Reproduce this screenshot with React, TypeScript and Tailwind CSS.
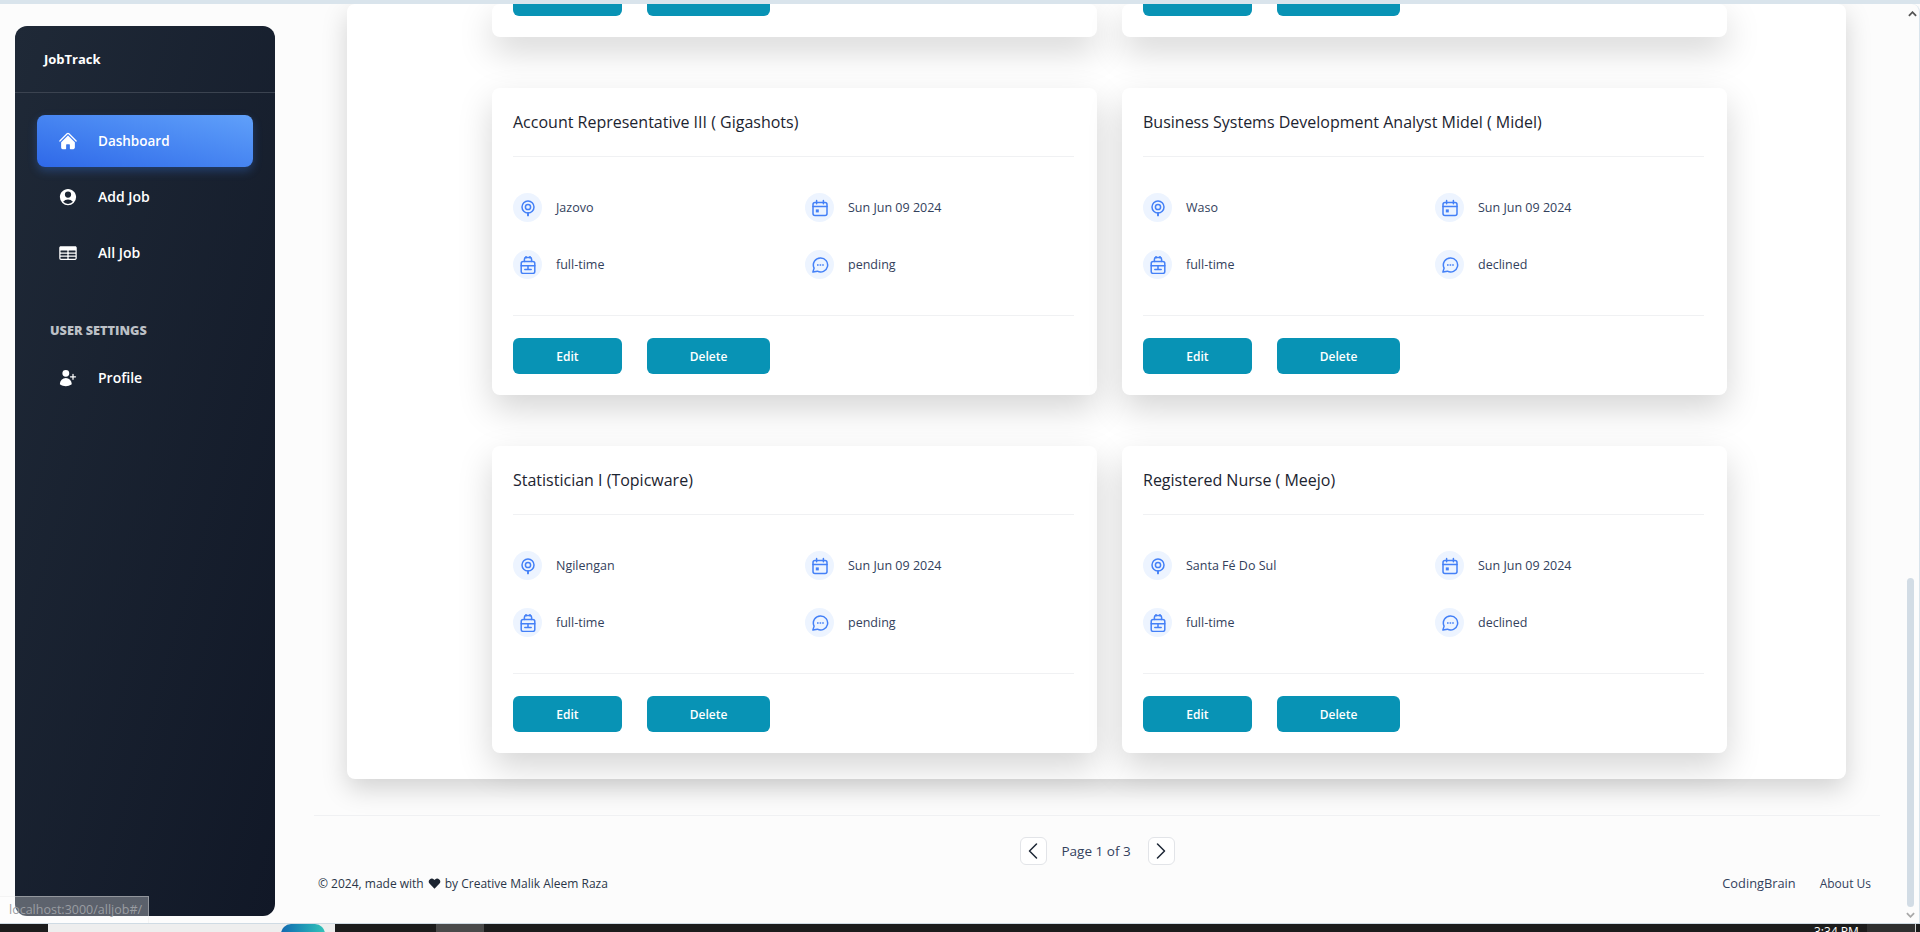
import { HiHome, HiUserCircle, HiTableCells, HiUserPlus } from "react-icons/hi2";
import { ChevronLeft, ChevronRight } from "lucide-react";

const jobs = [
  [
    { title: "Account Representative III ( Gigashots)", place: "Jazovo", date: "Sun Jun 09 2024", type: "full-time", status: "pending" },
    { title: "Business Systems Development Analyst Midel ( Midel)", place: "Waso", date: "Sun Jun 09 2024", type: "full-time", status: "declined" },
  ],
  [
    { title: "Statistician I (Topicware)", place: "Ngilengan", date: "Sun Jun 09 2024", type: "full-time", status: "pending" },
    { title: "Registered Nurse ( Meejo)", place: "Santa Fé Do Sul", date: "Sun Jun 09 2024", type: "full-time", status: "declined" },
  ],
];

const navItems = [
  { label: "Dashboard", icon: HiHome, active: true },
  { label: "Add Job", icon: HiUserCircle },
  { label: "All Job", icon: HiTableCells },
];

function PinIcon() {
  return (
    <svg viewBox="0 0 18 18" className="w-[18px] h-[18px]" fill="none" stroke="currentColor" strokeWidth="1.5">
      <circle cx="9" cy="8" r="6" />
      <circle cx="9" cy="8" r="2.6" />
      <path d="M9 14v2.4" strokeWidth="1.9" strokeLinecap="round" />
    </svg>
  );
}

function CalendarIcon() {
  return (
    <svg viewBox="0 0 18 18" className="w-[18px] h-[18px]" fill="none" stroke="currentColor" strokeWidth="1.5">
      <rect x="2" y="3.4" width="14" height="13.2" rx="2" />
      <path d="M2 7.6h14M5.6 1.4v3.4M12.4 1.4v3.4" strokeLinecap="round" />
      <rect x="4.8" y="10.4" width="3" height="3" fill="currentColor" stroke="none" />
    </svg>
  );
}

function BagIcon() {
  return (
    <svg viewBox="0 0 18 18" className="w-[18px] h-[18px]" fill="none" stroke="currentColor" strokeWidth="1.5">
      <rect x="2.2" y="5.4" width="13.6" height="12" rx="2" />
      <path d="M5.4 5.4V3.2a1.6 1.6 0 0 1 1.6-1.6h4a1.6 1.6 0 0 1 1.6 1.6v2.2M2.2 9.8h13.6M9 9.8v3.4M5.8 13.4h6.4M7 .4v1.6M11 .4v1.6" strokeLinecap="round" />
    </svg>
  );
}

function ChatIcon() {
  return (
    <svg viewBox="0 0 18 18" className="w-[18px] h-[18px]" fill="none" stroke="currentColor" strokeWidth="1.5">
      <path d="M9.6 2a7 7 0 1 1-3.2 13.2L1.9 16l1.2-3.9A7 7 0 0 1 9.6 2Z" strokeLinejoin="round" />
      <path d="M6 9h1.6M8.6 9h1.6M11.2 9h1.6" strokeWidth="1.6" />
    </svg>
  );
}

function InfoItem({ icon, text }: { icon: React.ReactNode; text: string }) {
  return (
    <div className="flex items-center gap-[14px]">
      <div className="w-[29px] h-[29px] rounded-full bg-[#edf4ff] text-[#4480f7] flex items-center justify-center flex-shrink-0">
        {icon}
      </div>
      <span className="pt-[1px] text-[12.5px] text-[#33415c]">{text}</span>
    </div>
  );
}

function CardButtons({ labels }: { labels: [string, string] }) {
  return (
    <div className="h-[79px] pt-[22px] flex gap-[25px]">
      <button className="w-[109px] h-[36px] pt-[1px] rounded-md bg-[#0893b5] text-white text-xs font-semibold">{labels[0]}</button>
      <button className="w-[123px] h-[36px] pt-[1px] rounded-md bg-[#0893b5] text-white text-xs font-semibold">{labels[1]}</button>
    </div>
  );
}

function JobCard({ job }: { job: (typeof jobs)[0][0] }) {
  return (
    <div className="bg-white rounded-lg pl-[21px] pr-[23px] shadow-[0_14px_34px_rgba(0,0,0,0.17)]">
      <div className="h-[69px] flex items-center border-b border-[#f0f1f3]">
        <h3 className="text-[16px] font-medium text-[#1c2430]">{job.title}</h3>
      </div>
      <div className="h-[159px] grid grid-cols-[292px_1fr] content-center gap-y-[28px] border-b border-[#f0f1f3]">
        <InfoItem icon={<PinIcon />} text={job.place} />
        <InfoItem icon={<CalendarIcon />} text={job.date} />
        <InfoItem icon={<BagIcon />} text={job.type} />
        <InfoItem icon={<ChatIcon />} text={job.status} />
      </div>
      <CardButtons labels={["Edit", "Delete"]} />
    </div>
  );
}

export default function App() {
  return (
    <div className="h-screen overflow-hidden flex flex-col font-['Open_Sans',sans-serif]">
      <div className="h-1 bg-[#d9e4ec] flex-shrink-0" />

      <div className="relative flex-1 min-h-0 flex bg-[#fcfcfc]">
        {/* Sidebar */}
        <div className="pl-[15px] pt-[22px] pb-[7px] flex-shrink-0">
          <aside className="w-[260px] h-full rounded-xl bg-gradient-to-br from-[#1f2937] to-[#111827] text-white">
            <div className="h-[67px] pl-[29px] pt-[2px] flex items-center border-b border-[#3b4350] text-[13px] font-bold">
              JobTrack
            </div>
            <nav className="px-[22px] pt-[22px] flex flex-col gap-1">
              {navItems.map((item) => {
                const Icon = item.icon;
                return (
                  <a
                    key={item.label}
                    className={
                      item.active
                        ? "h-[52px] pl-[21px] flex items-center gap-[20px] rounded-lg text-[13.5px] font-semibold bg-gradient-to-tr from-[#2f68e8] to-[#60a0fa] shadow-[0_4px_10px_rgba(59,130,246,0.3)]"
                        : "h-[52px] pl-[21px] pb-[1px] flex items-center gap-[20px] rounded-lg text-[14px] font-semibold"
                    }
                  >
                    <Icon className="w-5 h-5" />
                    {item.label}
                  </a>
                );
              })}
            </nav>
            <div className="pl-[35px] mt-[42px] h-[20px] flex items-center text-[12.7px] font-extrabold text-[#bcc0c6]">
              USER SETTINGS
            </div>
            <nav className="px-[22px] mt-[11px]">
              <a className="h-[52px] pl-[21px] pb-[1px] flex items-center gap-[20px] text-[14px] font-semibold">
                <HiUserPlus className="w-5 h-5" />
                Profile
              </a>
            </nav>
          </aside>
        </div>

        {/* Main */}
        <main className="flex-1 min-w-0 pl-[39px] pr-[23px] flex flex-col">
          <div className="flex-1 min-h-0 overflow-hidden flex flex-col justify-end pl-[33px] pr-[34px] pb-[36px]">
            <div className="bg-white rounded-lg pl-[145px] pr-[119px] pb-[26px] shadow-[0_10px_26px_rgba(0,0,0,0.17)] flex flex-col gap-[51px] flex-shrink-0">
              {/* row scrolled past the top of the window, only its buttons still show */}
              <div className="grid grid-cols-2 gap-[25px] h-[33px] items-end">
                <div className="bg-white rounded-lg px-[21px] shadow-[0_14px_34px_rgba(0,0,0,0.17)]">
                  <div className="h-[33px] overflow-hidden">
                    <div className="-mt-[46px]">
                      <CardButtons labels={["", ""]} />
                    </div>
                  </div>
                </div>
                <div className="bg-white rounded-lg px-[21px] shadow-[0_14px_34px_rgba(0,0,0,0.17)]">
                  <div className="h-[33px] overflow-hidden">
                    <div className="-mt-[46px]">
                      <CardButtons labels={["", ""]} />
                    </div>
                  </div>
                </div>
              </div>
              {jobs.map((row, i) => (
                <div key={i} className="grid grid-cols-2 gap-[25px]">
                  {row.map((job) => (
                    <JobCard key={job.title} job={job} />
                  ))}
                </div>
              ))}
            </div>
          </div>

          <div className="h-[108px] flex-shrink-0 border-t border-[#f0f1f3] pt-[21px] text-[#33415c]">
            <div className="flex items-center justify-center gap-[15px] h-[28px] text-[13.5px]">
              <button className="w-[27px] h-[28px] rounded-md border border-[#e2e4e8] bg-white text-[#1f2937] flex items-center justify-center">
                <ChevronLeft className="w-7 h-7 flex-shrink-0" strokeWidth={1.3} />
              </button>
              <span className="w-[71px] pt-[1px] whitespace-nowrap">Page 1 of 3</span>
              <button className="w-[27px] h-[28px] rounded-md border border-[#e2e4e8] bg-white text-[#1f2937] flex items-center justify-center">
                <ChevronRight className="w-7 h-7 flex-shrink-0" strokeWidth={1.3} />
              </button>
            </div>
            <div className="mt-[9px] pl-[4px] pr-[9px] flex items-center justify-between text-[12px]">
              <p className="flex items-center gap-[4px] text-[#2b3648]">
                © 2024, made with
                <svg viewBox="0 0 24 24" className="w-[13px] h-[13px] fill-[#1c2430]">
                  <path d="M12 21.5 3.2 12.6a5.6 5.6 0 0 1 0-7.9 5.5 5.5 0 0 1 7.8 0l1 1 1-1a5.5 5.5 0 0 1 7.8 0 5.6 5.6 0 0 1 0 7.9Z" />
                </svg>
                by Creative Malik Aleem Raza
              </p>
              <div className="flex items-center gap-[24px]">
                <a className="text-[12.8px]">CodingBrain</a>
                <a>About Us</a>
              </div>
            </div>
          </div>
        </main>

        {/* Window scrollbar */}
        <div className="w-[17px] flex-shrink-0 flex flex-col items-center justify-end pr-[1px] border-r border-[#d9e4ec] rounded-tr-lg bg-[#fcfcfc]">
          <div className="w-[7px] h-[329px] rounded-full bg-[#d2dce5]" />
          <svg viewBox="0 0 10 6" className="w-[9px] h-[6px] my-[5px]" fill="none" stroke="#a9a9a9" strokeWidth="2">
            <path d="M1 1l4 4 4-4" />
          </svg>
        </div>

        {/* Browser status bubble */}
        <div className="absolute left-0 bottom-0 w-[149px] h-[27px] pl-[9px] flex items-center bg-white/30 border-t border-r border-[#e6e6e6]/40 text-[12.5px] text-[#9a9da2] whitespace-nowrap overflow-hidden">
          localhost:3000/alljob#/
        </div>
        <svg viewBox="0 0 10 6" className="absolute top-[7px] right-[3px] w-[9px] h-[6px]" fill="none" stroke="#555" strokeWidth="2">
          <path d="M1 5l4-4 4 4" />
        </svg>
      </div>

      {/* OS taskbar */}
      <div className="h-[9px] flex-shrink-0 border-t border-[#cfdbe4] bg-[#1c1c1c] flex overflow-hidden">
        <div className="w-[48px]" />
        <div className="w-[287px] bg-[#eeeeee] flex justify-end pr-[10px]">
          <div className="w-[44px] h-[20px] rounded-full bg-gradient-to-r from-[#1569b0] to-[#34c3b8]" />
        </div>
        <div className="w-[101px]" />
        <div className="w-[48px] bg-[#4a4a4a]" />
        <div className="flex-1" />
        <span className="w-[43px] mr-[10px] text-[12px] leading-[16px] text-white whitespace-nowrap">3:34 PM</span>
        <div className="w-[48px] bg-[#2f2f2f]" />
        <div className="w-[1px] bg-[#cfcfcf]" />
        <div className="w-[4px]" />
      </div>
    </div>
  );
}
